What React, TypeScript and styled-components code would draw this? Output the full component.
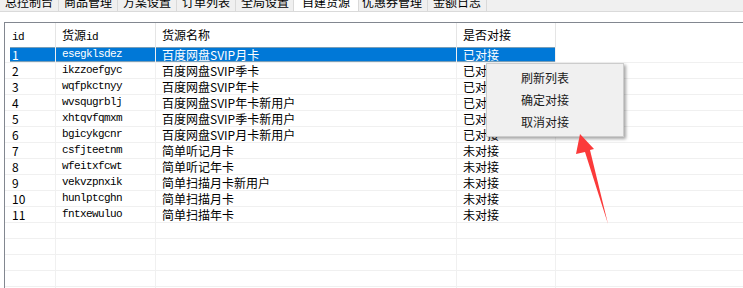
import styled, { createGlobalStyle } from 'styled-components';

const GlobalStyle = createGlobalStyle`
  html, body {
    margin: 0;
    padding: 0;
    background: #fff;
  }
  body {
    font-family: 'Microsoft YaHei', 'Noto Sans CJK SC', sans-serif;
    font-size: 12px;
    color: #000;
  }
`;

const Window = styled.div`
  position: relative;
  width: 743px;
  height: 288px;
  overflow: hidden;
  background: #fff;
`;

const TabStrip = styled.div`
  display: flex;
  align-items: flex-end;
  height: 11px;
  background: #f0f0f0;
  border-bottom: 1px solid #dadada;
  overflow: hidden;
`;

const Tab = styled.div<{ $active?: boolean }>`
  flex: none;
  height: 24px;
  display: flex;
  align-items: flex-end;
  padding: 0 ${(p) => (p.$active ? 8 : 5)}px 1px;
  line-height: 16px;
  white-space: nowrap;
  background: ${(p) => (p.$active ? '#fff' : '#f0f0f0')};
  border-right: 1px solid #d9d9d9;
  border-left: ${(p) => (p.$active ? '1px solid #d9d9d9' : 'none')};
  margin-left: ${(p) => (p.$active ? '-2px' : '0')};
  margin-right: ${(p) => (p.$active ? '-2px' : '0')};
  position: relative;
  z-index: ${(p) => (p.$active ? 1 : 0)};
`;

const Panel = styled.div`
  margin: 10px 0 0 4px;
  border-top: 1px solid #828790;
  border-left: 1px solid #828790;
`;

const HeaderRow = styled.div`
  display: flex;
  height: 24px;
`;

const HeaderCell = styled.div<{ $w: number; $mono?: boolean }>`
  flex: none;
  width: ${(p) => p.$w}px;
  box-sizing: border-box;
  padding-left: ${(p) => (p.$w === 51 ? 7 : 6)}px;
  border-right: 1px solid #e5e5e5;
  line-height: 24px;
  font-family: 'SimSun', 'Noto Sans CJK SC', sans-serif;
  letter-spacing: 0;
`;

const Mono = styled.span`
  font-family: 'Liberation Mono', monospace;
  font-size: 11px;
  letter-spacing: -0.6px;
`;

const Row = styled.div`
  display: flex;
  height: 16px;
  box-sizing: border-box;
  border-bottom: 1px solid #f0f0f0;
`;

const Cell = styled.div<{ $w: number; $first?: boolean; $sel?: boolean; $mono?: boolean }>`
  flex: none;
  width: ${(p) => p.$w}px;
  box-sizing: border-box;
  margin-left: ${(p) => (p.$first ? 5 : 0)}px;
  padding-left: ${(p) => (p.$first ? 2 : 6)}px;
  border-right: 1px solid #f0f0f0;
  line-height: 15px;
  white-space: nowrap;
  overflow: hidden;
  background: ${(p) => (p.$sel ? '#0078d7' : 'transparent')};
  color: ${(p) => (p.$sel ? '#fff' : '#000')};
  box-shadow: ${(p) => (p.$sel ? 'inset 0 1px 0 #7a9fb8, inset 0 -1px 0 #7a9fb8' : 'none')};
  font-family: ${(p) =>
    p.$mono ? "'Liberation Mono', monospace" : "'Microsoft YaHei', 'Noto Sans CJK SC', sans-serif"};
  font-size: ${(p) => (p.$mono ? 11 : 12)}px;
  letter-spacing: ${(p) => (p.$mono ? '-0.6px' : '0')};
`;

const Filler = styled.div`
  flex: 1;
`;

const Menu = styled.div`
  position: absolute;
  left: 486px;
  top: 63px;
  width: 138px;
  box-sizing: border-box;
  padding: 3px 0 3px;
  background: #f0f0f0;
  border: 1px solid #cccccc;
  box-shadow: 2px 2px 3px rgba(0, 0, 0, 0.35);
`;

const MenuItem = styled.div`
  height: 22px;
  line-height: 22px;
  padding-left: 34px;
  color: #1a1a1a;
`;

const Arrow = styled.svg`
  position: absolute;
  left: 0;
  top: 0;
  pointer-events: none;
`;

const tabs = ['总控制台', '商品管理', '方案设置', '订单列表', '全局设置', '自建货源', '优惠券管理', '金额日志'];

const rows = [
  ['1', 'esegklsdez', '百度网盘SVIP月卡', '已对接'],
  ['2', 'ikzzoefgyc', '百度网盘SVIP季卡', '已对接'],
  ['3', 'wqfpkctnyy', '百度网盘SVIP年卡', '已对接'],
  ['4', 'wvsqugrblj', '百度网盘SVIP年卡新用户', '已对接'],
  ['5', 'xhtqvfqmxm', '百度网盘SVIP季卡新用户', '已对接'],
  ['6', 'bgicykgcnr', '百度网盘SVIP月卡新用户', '已对接'],
  ['7', 'csfjteetnm', '简单听记月卡', '未对接'],
  ['8', 'wfeitxfcwt', '简单听记年卡', '未对接'],
  ['9', 'vekvzpnxik', '简单扫描月卡新用户', '未对接'],
  ['10', 'hunlptcghn', '简单扫描月卡', '未对接'],
  ['11', 'fntxewuluo', '简单扫描年卡', '未对接'],
  ['', '', '', ''],
  ['', '', '', ''],
  ['', '', '', ''],
  ['', '', '', ''],
  ['', '', '', ''],
];

const App = () => {
  return (
    <Window>
      <GlobalStyle />
      <TabStrip>
        {tabs.map((t) => (
          <Tab key={t} $active={t === '自建货源'}>
            {t}
          </Tab>
        ))}
      </TabStrip>
      <Panel>
        <HeaderRow>
          <HeaderCell $w={51}>
            <Mono>id</Mono>
          </HeaderCell>
          <HeaderCell $w={100}>
            货源<Mono>id</Mono>
          </HeaderCell>
          <HeaderCell $w={301}>货源名称</HeaderCell>
          <HeaderCell $w={99}>是否对接</HeaderCell>
          <Filler />
        </HeaderRow>
        {rows.map((r, i) => {
          const sel = i === 0;
          return (
            <Row key={i}>
              <Cell $w={46} $first $sel={sel}>
                {r[0]}
              </Cell>
              <Cell $w={100} $sel={sel} $mono>
                {r[1]}
              </Cell>
              <Cell $w={301} $sel={sel}>
                {r[2]}
              </Cell>
              <Cell $w={99} $sel={sel}>
                {r[3]}
              </Cell>
              <Filler />
            </Row>
          );
        })}
      </Panel>
      <Menu>
        <MenuItem>刷新列表</MenuItem>
        <MenuItem>确定对接</MenuItem>
        <MenuItem>取消对接</MenuItem>
      </Menu>
      <Arrow width="743" height="288" viewBox="0 0 743 288">
        <polygon
          points="580,134 594,149 590,150 608,224 585,152 576,154"
          fill="#fb3a3a"
        />
      </Arrow>
    </Window>
  );
};

export default App;
